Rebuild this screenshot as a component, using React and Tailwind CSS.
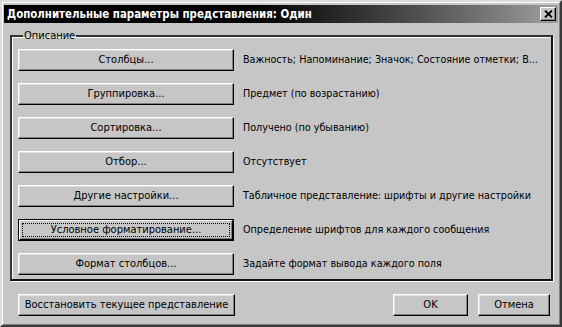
const rows = [
  ["Столбцы...", "Важность; Напоминание; Значок; Состояние отметки; В..."],
  ["Группировка...", "Предмет (по возрастанию)"],
  ["Сортировка...", "Получено (по убыванию)"],
  ["Отбор...", "Отсутствует"],
  ["Другие настройки...", "Табличное представление: шрифты и другие настройки"],
  ["Условное форматирование...", "Определение шрифтов для каждого сообщения", true],
  ["Формат столбцов...", "Задайте формат вывода каждого поля"],
];

// classic 3d button
function Btn({ children, className = "", isDefault = false }) {
  if (isDefault) {
    return (
      <div className={"border border-black " + className}>
        <div className="h-full border border-t-white border-l-white border-b-black border-r-black shadow-[inset_-1px_-1px_0_#808080] p-[2px]">
          <div className="h-full flex items-center justify-center border border-dotted border-black">
            {children}
          </div>
        </div>
      </div>
    );
  }
  return (
    <div
      className={
        "flex items-center justify-center whitespace-nowrap border border-t-white border-l-white border-b-black border-r-black shadow-[inset_-1px_-1px_0_#808080,inset_1px_1px_0_#dedede] " +
        className
      }
    >
      {children}
    </div>
  );
}

export default function App() {
  return (
    <div
      className="w-[562px] h-[327px] bg-[#c6c6c6] border-2 border-t-[#dcdcdc] border-l-[#dcdcdc] border-b-[#3a3a3a] border-r-[#3a3a3a] text-black text-[11px] leading-[14px] overflow-hidden"
      style={{ fontFamily: '"DejaVu Sans Condensed", "DejaVu Sans", sans-serif' }}
    >
      <div className="h-full flex flex-col border border-t-white border-l-white border-b-[#808080] border-r-[#808080] px-[1px] pt-[1px]">
        {/* Title bar */}
        <div className="mt-[1px] h-[18px] flex items-center justify-between pl-[3px] pr-[2px] bg-gradient-to-r from-black from-[35%] to-[#a0a0a0]">
          <span className="text-white font-bold text-[11.4px]">
            Дополнительные параметры представления: Один
          </span>
          <div className="w-[16px] h-[14px] flex items-center justify-center bg-[#c6c6c6] border border-t-white border-l-white border-b-black border-r-black shadow-[inset_-1px_-1px_0_#808080]">
            <svg width="9" height="8" viewBox="0 0 9 8">
              <path d="M1 0.5 L8 7.5 M8 0.5 L1 7.5" stroke="black" strokeWidth="1.8" />
            </svg>
          </div>
        </div>

        {/* Body */}
        <div className="flex-1 flex flex-col pl-[6px] pr-[5px] pt-[6px]">
          <fieldset className="border-2 border-t-[#333] border-l-[#333] border-b-[#111] border-r-[#111] shadow-[1px_1px_0_white,inset_1px_1px_0_white] pl-[6px] pr-[4px] pt-[6px] pb-[4px]">
            <legend className="ml-[5px] px-[1px] leading-[14px]">Описание</legend>
            <div className="flex flex-col gap-[12px]">
              {rows.map(([label, desc, def]) => (
                <div key={label} className="flex items-center gap-[9px]">
                  <Btn className="w-[216px] h-[22px]" isDefault={def}>
                    {label}
                  </Btn>
                  <span className="whitespace-nowrap text-[10.7px]">{desc}</span>
                </div>
              ))}
            </div>
          </fieldset>

          <div className="mt-[13px] flex justify-between pl-[8px] pr-[3px]">
            <Btn className="w-[217px] h-[22px]">Восстановить текущее представление</Btn>
            <div className="flex gap-[10px]">
              <Btn className="w-[75px] h-[22px]">OK</Btn>
              <Btn className="w-[72px] h-[22px]">Отмена</Btn>
            </div>
          </div>
        </div>
      </div>
    </div>
  );
}
